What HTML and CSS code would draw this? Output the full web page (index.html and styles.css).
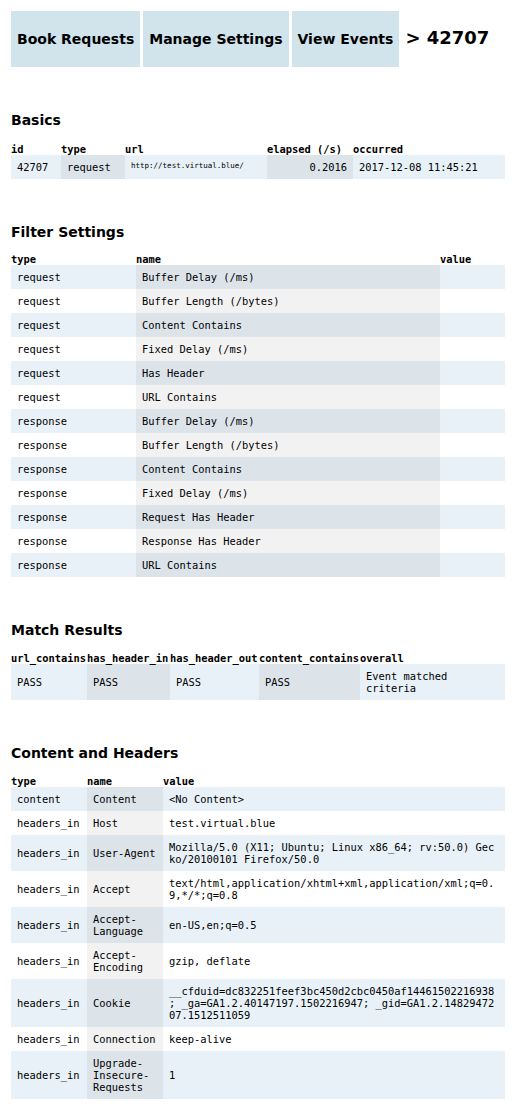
FILE: index.html
```html
<!DOCTYPE html>
<html lang="en">
<head>
    <meta charset="UTF-8">
    <title>Event 42707</title>
    <link rel="stylesheet" href="styles.css">
</head>
<body>
    <div class="page">
        <nav class="crumbs">
            <a class="crumb" href="#">Book Requests</a>
            <a class="crumb" href="#">Manage Settings</a>
            <a class="crumb" href="#">View Events</a>
            <h2 class="current">&gt; 42707</h2>
        </nav>

        <h3 class="first">Basics</h3>
        <table class="grid">
            <colgroup>
                <col class="b-id"><col class="b-type"><col class="b-url"><col class="b-elapsed"><col class="b-occurred">
            </colgroup>
            <thead>
                <tr><th>id</th><th>type</th><th>url</th><th>elapsed (/s)</th><th>occurred</th></tr>
            </thead>
            <tbody>
                <tr>
                    <td>42707</td>
                    <td>request</td>
                    <td class="url">http://test.virtual.blue/</td>
                    <td class="num">0.2016</td>
                    <td>2017-12-08 11:45:21</td>
                </tr>
            </tbody>
        </table>

        <h3>Filter Settings</h3>
        <table class="grid">
            <colgroup>
                <col class="f-type"><col class="f-name"><col class="f-value">
            </colgroup>
            <thead>
                <tr><th>type</th><th>name</th><th>value</th></tr>
            </thead>
            <tbody>
                <tr><td>request</td><td>Buffer Delay (/ms)</td><td></td></tr>
                <tr><td>request</td><td>Buffer Length (/bytes)</td><td></td></tr>
                <tr><td>request</td><td>Content Contains</td><td></td></tr>
                <tr><td>request</td><td>Fixed Delay (/ms)</td><td></td></tr>
                <tr><td>request</td><td>Has Header</td><td></td></tr>
                <tr><td>request</td><td>URL Contains</td><td></td></tr>
                <tr><td>response</td><td>Buffer Delay (/ms)</td><td></td></tr>
                <tr><td>response</td><td>Buffer Length (/bytes)</td><td></td></tr>
                <tr><td>response</td><td>Content Contains</td><td></td></tr>
                <tr><td>response</td><td>Fixed Delay (/ms)</td><td></td></tr>
                <tr><td>response</td><td>Request Has Header</td><td></td></tr>
                <tr><td>response</td><td>Response Has Header</td><td></td></tr>
                <tr><td>response</td><td>URL Contains</td><td></td></tr>
            </tbody>
        </table>

        <h3 class="loose">Match Results</h3>
        <table class="grid">
            <colgroup>
                <col class="m-url"><col class="m-in"><col class="m-out"><col class="m-content"><col class="m-overall">
            </colgroup>
            <thead>
                <tr><th>url_contains</th><th>has_header_in</th><th>has_header_out</th><th>content_contains</th><th>overall</th></tr>
            </thead>
            <tbody>
                <tr><td>PASS</td><td>PASS</td><td>PASS</td><td>PASS</td><td>Event matched criteria</td></tr>
            </tbody>
        </table>

        <h3 class="loose">Content and Headers</h3>
        <table class="grid">
            <colgroup>
                <col class="h-type"><col class="h-name"><col class="h-value">
            </colgroup>
            <thead>
                <tr><th>type</th><th>name</th><th>value</th></tr>
            </thead>
            <tbody>
                <tr><td>content</td><td>Content</td><td class="raw">&lt;No Content&gt;</td></tr>
                <tr><td>headers_in</td><td>Host</td><td class="raw">test.virtual.blue</td></tr>
                <tr><td>headers_in</td><td>User-Agent</td><td class="raw">Mozilla/5.0 (X11; Ubuntu; Linux x86_64; rv:50.0) Gecko/20100101 Firefox/50.0</td></tr>
                <tr><td>headers_in</td><td>Accept</td><td class="raw">text/html,application/xhtml+xml,application/xml;q=0.9,*/*;q=0.8</td></tr>
                <tr><td>headers_in</td><td>Accept-Language</td><td class="raw">en-US,en;q=0.5</td></tr>
                <tr><td>headers_in</td><td>Accept-Encoding</td><td class="raw">gzip, deflate</td></tr>
                <tr><td>headers_in</td><td>Cookie</td><td class="raw">__cfduid=dc832251feef3bc450d2cbc0450af14461502216938; _ga=GA1.2.40147197.1502216947; _gid=GA1.2.1482947207.1512511059</td></tr>
                <tr><td>headers_in</td><td>Connection</td><td class="raw">keep-alive</td></tr>
                <tr><td>headers_in</td><td>Upgrade-Insecure-Requests</td><td class="raw">1</td></tr>
            </tbody>
        </table>
    </div>
</body>
</html>
```

FILE: styles.css
```css
* {
    box-sizing: border-box;
}

body {
    margin: 0;
    font-family: "DejaVu Sans", sans-serif;
    font-size: 12px;
    color: #000;
    background: #fff;
}

.page {
    padding: 11px;
}

/* breadcrumb bar */
.crumbs {
    display: flex;
    align-items: baseline;
    gap: 3px;
}

.crumb {
    display: block;
    padding: 20px 6px;
    background: #d1e4ec;
    color: #000;
    text-decoration: none;
    font-weight: bold;
    font-size: 14px;
    line-height: 16px;
}

.current {
    margin: 0 0 0 3px;
    font-size: 18px;
    font-weight: bold;
}

h3 {
    margin: 45px 0 13px;
    font-size: 14px;
    font-weight: bold;
}

h3.first {
    margin-top: 45px;
    margin-bottom: 15px;
}

h3.loose {
    margin-bottom: 14px;
}

/* data tables */
.grid {
    width: 494px;
    table-layout: fixed;
    border-collapse: collapse;
    border-spacing: 0;
    font-family: "DejaVu Sans Mono", monospace;
    font-size: 10.4px;
    line-height: 12px;
}

.grid th {
    padding: 0;
    text-align: left;
    vertical-align: bottom;
    font-weight: bold;
    white-space: nowrap;
}

.grid td {
    padding: 6px;
    vertical-align: middle;
}

.grid tbody tr:nth-child(odd) {
    background: #e8f1f7;
}

.grid td:nth-child(even) {
    background: rgba(0, 0, 0, 0.05);
}

.grid td.num {
    text-align: right;
}

.grid td.url {
    vertical-align: top;
    padding-top: 6px;
    font-size: 7.5px;
    line-height: 9px;
}

.grid td.raw {
    word-break: break-all;
    line-break: anywhere;
}

.b-id { width: 50px; }
.b-type { width: 64px; }
.b-url { width: 142px; }
.b-elapsed { width: 86px; }
.b-occurred { width: 152px; }

.f-type { width: 125px; }
.f-name { width: 304px; }
.f-value { width: 65px; }

.m-url { width: 76px; }
.m-in { width: 83px; }
.m-out { width: 89px; }
.m-content { width: 101px; }
.m-overall { width: 145px; }

.h-type { width: 76px; }
.h-name { width: 76px; }
.h-value { width: 342px; }
```
